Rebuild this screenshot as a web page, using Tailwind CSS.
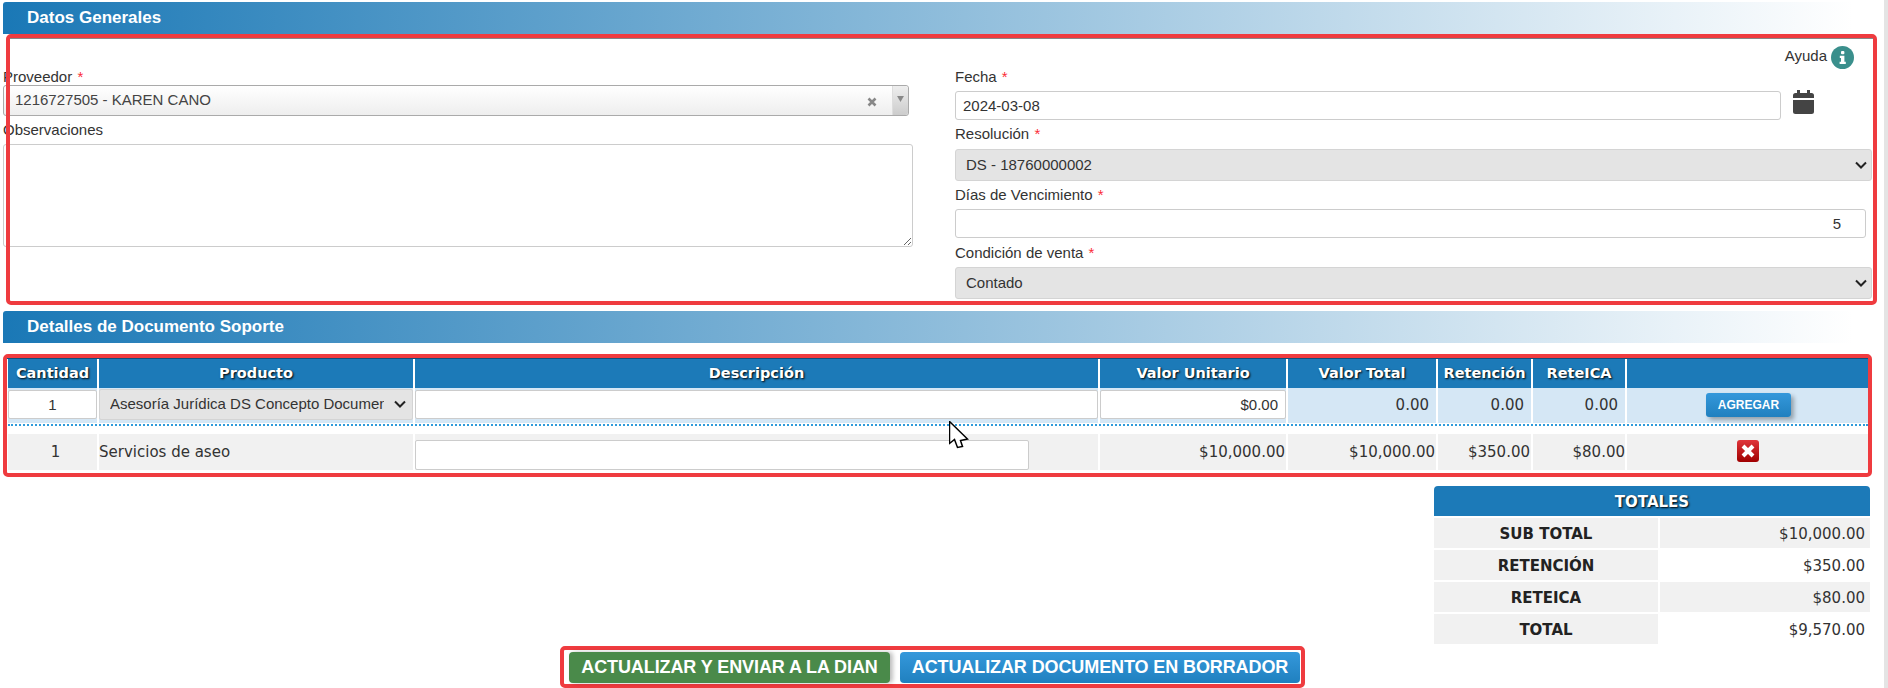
<!DOCTYPE html>
<html lang="es">
<head>
  <meta charset="UTF-8" />
  <title>Documento Soporte</title>
  <script src="https://cdn.jsdelivr.net/npm/@tailwindcss/browser@4"></script>
</head>
<body class="w-[1888px] h-[688px] overflow-hidden bg-white text-[#333] font-['Liberation_Sans',sans-serif] text-[15px]">
<div class="flex h-[688px]">
<main class="relative w-[1884px] h-[688px] pt-[2px]">

  <!-- Datos generales -->
  <h2 class="ml-[3px] w-[1850px] h-[32px] pl-[24px] rounded-t-[3px] bg-linear-to-r/srgb from-[#1a78b6] to-white text-white font-bold text-[17px] leading-[31px]">Datos Generales</h2>
  <section class="relative h-[271px] flex">
    <div class="ml-[3px] w-[910px] pt-[33px]">
      <label class="block leading-[20px]">Proveedor <span class="ml-[1px] text-red-500">*</span></label>
      <div class="mt-[-2px] h-[31px] w-[906px] flex items-center rounded-[3px] border border-[#aaa] bg-linear-to-b/srgb from-white to-[#eee] pl-[11px] text-[#444]">
        <span class="flex-1">1216727505 - KAREN CANO</span>
        <svg class="mr-[15px] mt-[3px]" width="10" height="10" viewBox="0 0 10 10"><path d="M1.5 1.5l7 7M8.5 1.5l-7 7" stroke="#888" stroke-width="2.6" /></svg>
        <span class="w-[16px] h-full flex justify-center pt-[10px] bg-linear-to-b/srgb from-[#eee] to-[#ccc] border-l border-[#ddd] rounded-r-[3px]">
          <svg width="7" height="6" viewBox="0 0 8 7"><path d="M0 0h8L4 7z" fill="#888" /></svg>
        </span>
      </div>
      <label class="block mt-[4px] leading-[20px]">Observaciones</label>
      <textarea class="block mt-[4px] w-[910px] h-[103px] border border-[#ccc] rounded-[3px] bg-white"></textarea>
    </div>

    <div class="ml-[42px] w-[917px] pt-[12px]">
      <div class="h-[23px] w-[899px] flex items-center justify-end gap-[4px]">
        <span class="mb-[2px]">Ayuda</span>
        <svg width="23" height="23" viewBox="0 0 23 23"><circle cx="11.5" cy="11.5" r="11.5" fill="#3a8f8c" /><rect x="10" y="5" width="3.4" height="3.2" rx="1" fill="#fff" /><path d="M8.8 9.8h4.6v6h1.4v2.2H8.6v-2.2H10v-3.8H8.8z" fill="#fff" /></svg>
      </div>
      <label class="block mt-[-2px] leading-[20px]">Fecha <span class="ml-[1px] text-red-500">*</span></label>
      <div class="flex items-start mt-[4px] h-[29px]">
        <input value="2024-03-08" class="w-[826px] h-[29px] border border-[#ccc] rounded-[3px] px-[7px] bg-white" />
        <svg class="ml-[12px] mt-[-1px]" width="21" height="24" viewBox="0 0 21 24"><path d="M4 0h3v3h7V0h3v3h1.5A2.5 2.5 0 0 1 21 5.5V8H0V5.5A2.5 2.5 0 0 1 2.5 3H4z" fill="#444" /><path d="M0 10h21v11.5a2.5 2.5 0 0 1-2.5 2.5h-16A2.5 2.5 0 0 1 0 21.5z" fill="#444" /></svg>
      </div>
      <label class="block mt-[4px] leading-[20px]">Resolución <span class="ml-[1px] text-red-500">*</span></label>
      <div class="relative mt-[5px] h-[32px]">
        <select class="appearance-none w-[917px] h-[32px] border border-[#d4d4d4] rounded-[3px] bg-[#e4e4e4] pl-[10px]"><option>DS - 18760000002</option></select>
        <svg class="absolute right-[5px] top-[12px]" width="12" height="8" viewBox="0 0 12 8"><path d="M1 1.5l5 5 5-5" fill="none" stroke="#222" stroke-width="2" /></svg>
      </div>
      <label class="block mt-[4px] leading-[20px]">Días de Vencimiento <span class="ml-[1px] text-red-500">*</span></label>
      <input value="5" class="block mt-[4px] w-[911px] h-[29px] border border-[#ccc] rounded-[3px] px-[24px] text-right bg-white" />
      <label class="block mt-[5px] leading-[20px]">Condición de venta <span class="ml-[1px] text-red-500">*</span></label>
      <div class="relative mt-[4px] h-[32px]">
        <select class="appearance-none w-[917px] h-[32px] border border-[#d4d4d4] rounded-[3px] bg-[#e4e4e4] pl-[10px]"><option>Contado</option></select>
        <svg class="absolute right-[5px] top-[12px]" width="12" height="8" viewBox="0 0 12 8"><path d="M1 1.5l5 5 5-5" fill="none" stroke="#222" stroke-width="2" /></svg>
      </div>
    </div>
    <div class="absolute left-[6px] top-0 w-[1871px] h-[271px] border-[4px] border-[#ef3b3f] rounded-[5px] pointer-events-none"><div class="h-px bg-[#888]"></div></div>
  </section>

  <!-- Detalles -->
  <h2 class="mt-[6px] ml-[3px] w-[1850px] h-[32px] pl-[24px] rounded-t-[3px] bg-linear-to-r/srgb from-[#1a78b6] to-white text-white font-bold text-[17px] leading-[31px]">Detalles de Documento Soporte</h2>

  <section class="relative mt-[11px] h-[123px] pt-[4px] pl-[8px] font-['DejaVu_Sans',sans-serif]">
    <div class="grid grid-cols-[89px_314px_683px_186px_148px_93px_92px_241px] gap-x-[2px] w-[1860px] h-[29px] bg-white text-white font-bold text-[14.5px] leading-[31px] text-center [text-shadow:1px_1px_2px_#000]">
      <div class="bg-[#1c7ab8]">Cantidad</div>
      <div class="bg-[#1c7ab8]">Producto</div>
      <div class="bg-[#1c7ab8]">Descripción</div>
      <div class="bg-[#1c7ab8]">Valor Unitario</div>
      <div class="bg-[#1c7ab8]">Valor Total</div>
      <div class="bg-[#1c7ab8]">Retención</div>
      <div class="bg-[#1c7ab8]">ReteICA</div>
      <div class="bg-[#1c7ab8]"></div>
    </div>
    <div class="grid grid-cols-[89px_314px_683px_186px_148px_93px_92px_241px] gap-x-[2px] w-[1860px] h-[33px] mt-[1px] text-[15px] font-['Liberation_Sans',sans-serif]">
      <div class="bg-[#d5e7f5] pt-[2px]"><input value="1" class="w-full h-[29px] bg-white border border-[#ccc] rounded-[2px] text-center text-[#333]" /></div>
      <div class="relative bg-[#d5e7f5] pt-[1px]">
        <select class="appearance-none w-full h-[31px] bg-[#e4e4e4] border border-[#d4d4d4] rounded-[2px] pl-[10px] pr-[28px]"><option>Asesoría Jurídica DS Concepto Documento Soporte</option></select>
        <svg class="absolute right-[7px] top-[12px]" width="12" height="8" viewBox="0 0 12 8"><path d="M1 1.5l5 5 5-5" fill="none" stroke="#222" stroke-width="2" /></svg>
      </div>
      <div class="bg-[#d5e7f5] pt-[2px]"><input class="w-full h-[29px] bg-white border border-[#ccc] rounded-[2px]" /></div>
      <div class="bg-[#d5e7f5] pt-[2px]"><input value="$0.00" class="w-full h-[29px] bg-white border border-[#ccc] rounded-[2px] text-right px-[7px]" /></div>
      <div class="bg-[#d5e7f5] text-right pr-[7px] leading-[35px] font-['DejaVu_Sans',sans-serif]">0.00</div>
      <div class="bg-[#d5e7f5] text-right pr-[7px] leading-[35px] font-['DejaVu_Sans',sans-serif]">0.00</div>
      <div class="bg-[#d5e7f5] text-right pr-[7px] leading-[35px] font-['DejaVu_Sans',sans-serif]">0.00</div>
      <div class="bg-[#d5e7f5] pt-[5px] pl-[79px]">
        <button class="block w-[85px] h-[24px] rounded-[3px] bg-linear-to-b/srgb from-[#3498db] to-[#2080bf] text-white font-bold text-[12px] shadow-[3px_3px_4px_rgba(0,0,0,0.3)]">AGREGAR</button>
      </div>
    </div>
    <div class="w-[1860px] mt-[3px] border-t-[2px] border-dotted border-[#2f9bdb]"></div>
    <div class="grid grid-cols-[89px_314px_683px_186px_148px_93px_92px_241px] gap-x-[2px] w-[1860px] h-[36px] mt-[8px] text-[15px] leading-[36px]">
      <div class="bg-[#f1f1f1] text-center pl-[6px]">1</div>
      <div class="bg-[#f1f1f1]">Servicios de aseo</div>
      <div class="bg-[#f1f1f1] pt-[6px]"><input class="block w-[614px] h-[30px] bg-white border border-[#ccc] rounded-[2px]" /></div>
      <div class="bg-[#f1f1f1] text-right pr-[1px]">$10,000.00</div>
      <div class="bg-[#f1f1f1] text-right pr-[1px]">$10,000.00</div>
      <div class="bg-[#f1f1f1] text-right pr-[1px]">$350.00</div>
      <div class="bg-[#f1f1f1] text-right">$80.00</div>
      <div class="bg-[#f1f1f1] pt-[6px] pl-[110px]">
        <svg width="22" height="22" viewBox="0 0 22 22"><defs><linearGradient id="del" x1="0" y1="0" x2="0" y2="1"><stop offset="0" stop-color="#e0353a" /><stop offset="1" stop-color="#a00000" /></linearGradient></defs><rect width="22" height="22" rx="3" fill="url(#del)" /><path d="M6 6l10 10M16 6L6 16" stroke="#fff" stroke-width="4" /></svg>
      </div>
    </div>
    <div class="absolute left-[3px] top-0 w-[1869px] h-[123px] border-[4px] border-[#ef3b3f] rounded-[5px] pointer-events-none"><div class="h-px bg-[#0e4f7c]"></div></div>
    <!-- mouse pointer from the capture -->
    <svg class="absolute left-[949px] top-[67px]" width="20" height="28" viewBox="0 0 20 28"><path d="M0.5 0.5v22l5-4 3 8 5-1-2-6 7-1.5z" fill="#fff" stroke="#000" stroke-width="1.5" /></svg>
  </section>

  <!-- Totales -->
  <section class="ml-[1434px] mt-[9px] w-[436px] font-['DejaVu_Sans',sans-serif] text-[15px]">
    <div class="h-[30px] rounded-t-[4px] bg-[#1c7ab8] text-white font-bold text-center leading-[32px] [text-shadow:1px_1px_2px_#000]">TOTALES</div>
    <div class="grid grid-cols-[224px_210px] gap-[2px] mt-[2px] auto-rows-[30px] leading-[32px]">
      <div class="bg-[#f1f1f1] text-center font-bold text-[#222]">SUB TOTAL</div><div class="bg-[#f1f1f1] text-right pr-[5px]">$10,000.00</div>
      <div class="bg-[#f1f1f1] text-center font-bold text-[#222]">RETENCIÓN</div><div class="text-right pr-[5px]">$350.00</div>
      <div class="bg-[#f1f1f1] text-center font-bold text-[#222]">RETEICA</div><div class="bg-[#f1f1f1] text-right pr-[5px]">$80.00</div>
      <div class="bg-[#f1f1f1] text-center font-bold text-[#222]">TOTAL</div><div class="text-right pr-[5px]">$9,570.00</div>
    </div>
  </section>

  <!-- Acciones -->
  <div class="relative mt-[2px] ml-[560px] w-[745px] h-[42px] border-[4px] border-[#ef3b3f] rounded-[5px] flex gap-[10px] pl-[5px] pt-[2px]">
    <button class="w-[321px] h-[31px] rounded-[4px] bg-[#4a8a4a] text-white font-bold text-[18px] tracking-[-0.1px] shadow-[3px_0_4px_rgba(0,0,0,0.25)]">ACTUALIZAR Y ENVIAR A LA DIAN</button>
    <button class="w-[400px] h-[31px] rounded-[4px] bg-linear-to-b/srgb from-[#3498db] to-[#2080bf] text-white font-bold text-[18px] tracking-[-0.1px]">ACTUALIZAR DOCUMENTO EN BORRADOR</button>
  </div>
</main>
<aside class="w-[4px] h-[688px] bg-[#e4e4e4]"></aside>
</div>
</body>
</html>
